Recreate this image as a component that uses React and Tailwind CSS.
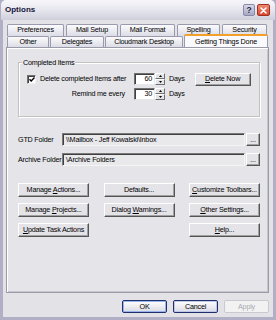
import React from "react";

function U({ children }) {
  return <span className="underline underline-offset-[1px]">{children}</span>;
}

function ClassicBtn({ children, className = "" }) {
  return (
    <div
      className={
        "h-[14px] flex items-center justify-center bg-[#e4e3e7] border border-t-[#ffffff] border-l-[#ffffff] border-r-[#555555] border-b-[#555555] shadow-[inset_-1px_-1px_0_#a0a0a0] whitespace-nowrap " +
        className
      }
    >
      {children}
    </div>
  );
}

function Spin({ value }) {
  return (
    <div className="flex h-[12px]">
      <div className="w-[21px] h-full bg-white border border-t-[#707070] border-l-[#707070] border-r-[#e8e8e8] border-b-[#e8e8e8] shadow-[inset_1px_1px_0_#404040] flex items-center justify-end pr-[2px]">
        {value}
      </div>
      <div className="w-[10px] h-full flex flex-col">
        <div className="flex-1 bg-[#e4e3e7] border border-t-white border-l-white border-r-[#707070] border-b-[#707070] flex items-center justify-center">
          <svg width="3" height="2" viewBox="0 0 3 2"><path d="M0 2 L1.5 0 L3 2Z" fill="#000" /></svg>
        </div>
        <div className="flex-1 bg-[#e4e3e7] border border-t-white border-l-white border-r-[#707070] border-b-[#707070] flex items-center justify-center">
          <svg width="3" height="2" viewBox="0 0 3 2"><path d="M0 0 L1.5 2 L3 0Z" fill="#000" /></svg>
        </div>
      </div>
    </div>
  );
}

function Tab({ children, w, pb = "" }) {
  return (
    <div
      className={
        "h-full flex items-center justify-center border border-b-0 border-[#9a9aae] rounded-t-[2px] bg-gradient-to-b from-[#fbfbfd] to-[#dcdce6] whitespace-nowrap " +
        w +
        " " +
        pb
      }
    >
      {children}
    </div>
  );
}

function TextBox({ children }) {
  return (
    <div className="flex-1 h-full bg-[#e9e9ec] border border-t-[#7a7a7a] border-l-[#7a7a7a] border-r-[#f4f4f4] border-b-[#f4f4f4] shadow-[inset_1px_1px_0_#404040] flex items-center pl-[3px] whitespace-nowrap overflow-hidden">
      {children}
    </div>
  );
}

function XpBtn({ children, className = "", disabled = false, def = false }) {
  if (disabled) {
    return (
      <div className="w-[45px] h-[13px] rounded-[2px] border border-[#c9c9cf] bg-[#f2f2f2] text-[#a9a9b0] flex items-center justify-center">
        {children}
      </div>
    );
  }
  return (
    <div
      className={
        "w-[45px] h-[13px] rounded-[2px] border border-[#1f2f6c] bg-gradient-to-b from-[#ffffff] to-[#dadae4] flex items-center justify-center " +
        (def ? "shadow-[inset_0_0_0_1px_#99b4ea]" : "shadow-[inset_0_0_0_1px_#c0c8e8]") +
        " " +
        className
      }
    >
      {children}
    </div>
  );
}

export default function App() {
  return (
    <div className="w-[276px] h-[320px] bg-[#b0afc6] flex flex-col overflow-hidden font-['Liberation_Sans',Arial,sans-serif] text-[7.2px] tracking-[-0.2px] text-black leading-none">
      {/* Title bar */}
      <div className="h-[20px] mx-[1px] flex items-center rounded-t-[5px] bg-gradient-to-b from-[#f7f7fa] via-[#e6e6ee] to-[#cfcfdc] px-[4px]">
        <span className="font-bold text-[8px] tracking-[0px] text-[#15153a]">Options</span>
        <div className="ml-auto flex gap-[2px] mr-[1px]">
          <div className="w-[12px] h-[12px] rounded-[2px] border border-[#8a8aa8] bg-gradient-to-b from-[#d8d8e8] to-[#a8a8c4] flex items-center justify-center">
            <span className="font-bold text-[9px] text-[#20204a] [text-shadow:0_0_1px_#fff]">?</span>
          </div>
          <div className="w-[13px] h-[12px] rounded-[2px] border border-[#a03020] bg-gradient-to-b from-[#f08870] to-[#d8442a] flex items-center justify-center">
            <svg width="7" height="7" viewBox="0 0 7 7">
              <path d="M1 1 L6 6 M6 1 L1 6" stroke="#fff" strokeWidth="1.6" strokeLinecap="round" />
            </svg>
          </div>
        </div>
      </div>

      {/* Client area */}
      <div className="flex-1 mx-[3px] mb-[3px] bg-[#e3e2e6] flex flex-col pl-[3px] pr-[4px] pt-[4px]">
        {/* Tabs row 1 */}
        <div className="h-[12px] flex gap-[2px] pl-[1px]">
          <Tab w="w-[57px]" pb="pb-[1px]">Preferences</Tab>
          <Tab w="w-[52px]" pb="pb-[1px]">Mail Setup</Tab>
          <Tab w="w-[55px]" pb="pb-[1px]">Mail Format</Tab>
          <Tab w="w-[43px]" pb="pb-[2px]">Spelling</Tab>
          <Tab w="w-[45px]" pb="pb-[1px]">Security</Tab>
        </div>
        {/* Tabs row 2 */}
        <div className="h-[11px] flex gap-[1px] pl-[1px]">
          <Tab w="w-[42px]">Other</Tab>
          <Tab w="w-[54px]">Delegates</Tab>
          <Tab w="w-[78px]">Cloudmark Desktop</Tab>
          <div className="relative z-10 w-[84px] h-[13px] -mt-[2px] bg-[#fafafc] border border-b-0 border-[#9a9aae] border-t-2 border-t-[#f2a02a] rounded-t-[2px] flex items-center justify-center whitespace-nowrap">
            Getting Things Done
          </div>
        </div>

        {/* Panel */}
        <div className="h-[246px] border border-[#9a9aa8] shadow-[inset_1px_1px_0_#ffffff,inset_-1px_-1px_0_#c8c8cc] bg-[#e5e5e9] flex flex-col pl-[11px] pr-[8px] pt-[14px]">
          {/* Completed items group */}
          <div className="relative h-[55px] border border-[#c2c2c0] shadow-[inset_1px_1px_0_#ffffff,1px_1px_0_#ffffff] pt-[10px] pl-[8px]">
            <span className="absolute -top-[4px] left-[3px] bg-[#e5e5e9] px-[1px]">Completed Items</span>
            <div className="flex items-center h-[12px]">
              <div className="w-[107px] flex items-center">
                <div className="w-[9px] h-[9px] bg-white border border-t-[#707070] border-l-[#707070] border-r-[#f0f0f0] border-b-[#f0f0f0] shadow-[inset_1px_1px_0_#404040] flex items-center justify-center">
                  <svg width="6" height="5" viewBox="0 0 6 5">
                    <path d="M0.5 2.2 L2.2 4 L5.5 0.6" stroke="#000" strokeWidth="1.4" fill="none" />
                  </svg>
                </div>
                <span className="ml-[4px] whitespace-nowrap">Delete completed Items after</span>
              </div>
              <Spin value="60" />
              <span className="ml-[4px]">Days</span>
              <ClassicBtn className="ml-[10px] w-[56px] !h-[13px]">
                <span><U>D</U>elete Now</span>
              </ClassicBtn>
            </div>
            <div className="flex items-center h-[12px] mt-[3px]">
              <div className="w-[107px] flex justify-end pr-[9px] whitespace-nowrap">Remind me every</div>
              <Spin value="30" />
              <span className="ml-[4px]">Days</span>
            </div>
          </div>

          {/* Folders */}
          <div className="mt-[16px] flex items-center h-[13px]">
            <span className="w-[44px] whitespace-nowrap">GTD Folder</span>
            <TextBox>\\Mailbox - Jeff Kowalski\Inbox</TextBox>
            <ClassicBtn className="w-[14px] !h-[13px] ml-[1px]">...</ClassicBtn>
          </div>
          <div className="mt-[7px] flex items-center h-[13px]">
            <span className="w-[44px] whitespace-nowrap">Archive Folder</span>
            <TextBox>\Archive Folders</TextBox>
            <ClassicBtn className="w-[14px] !h-[13px] ml-[1px]">...</ClassicBtn>
          </div>

          {/* Buttons grid */}
          <div className="mt-[17px] grid grid-cols-[71px_71px_71px] justify-between gap-y-[6px]">
            <ClassicBtn><span>Manage <U>A</U>ctions...</span></ClassicBtn>
            <ClassicBtn><span>Defaults...</span></ClassicBtn>
            <ClassicBtn><span><U>C</U>ustomize Toolbars...</span></ClassicBtn>
            <ClassicBtn><span>Manage <U>P</U>rojects...</span></ClassicBtn>
            <ClassicBtn><span>Dialog <U>W</U>arnings...</span></ClassicBtn>
            <ClassicBtn><span><U>O</U>ther Settings...</span></ClassicBtn>
            <ClassicBtn><span><U>U</U>pdate Task Actions</span></ClassicBtn>
            <div />
            <ClassicBtn><span><U>H</U>elp...</span></ClassicBtn>
          </div>
        </div>

        {/* Bottom buttons */}
        <div className="mt-[7px] flex justify-end gap-[6px]">
          <XpBtn def>OK</XpBtn>
          <XpBtn>Cancel</XpBtn>
          <XpBtn disabled>Apply</XpBtn>
        </div>
      </div>
    </div>
  );
}
